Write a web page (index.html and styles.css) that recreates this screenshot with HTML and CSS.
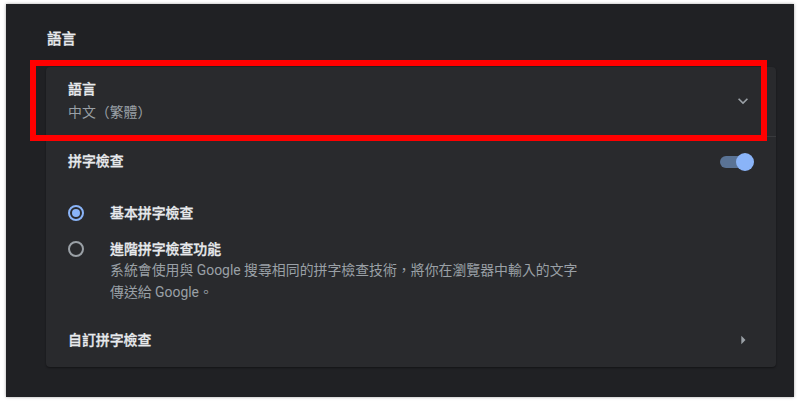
FILE: index.html
```html
<!DOCTYPE html>
<html lang="zh-Hant">
<head>
    <meta charset="UTF-8">
    <meta name="viewport" content="width=device-width, initial-scale=1.0">
    <title>語言設定</title>
    <link rel="stylesheet" href="styles.css">
</head>
<body>
    <div class="frame">
        <h2 class="section-title">語言</h2>

        <div class="card">
            <div class="row row-language">
                <div class="row-text">
                    <div class="label">語言</div>
                    <div class="sub">中文（繁體）</div>
                </div>
                <div class="icon-box">
                    <svg width="20" height="20" viewBox="0 0 24 24"><path d="M16.59 8.59L12 13.17 7.41 8.59 6 10l6 6 6-6z" fill="#9aa0a6"/></svg>
                </div>
            </div>

            <div class="row row-toggle">
                <div class="label">拼字檢查</div>
                <div class="toggle">
                    <span class="toggle-track"></span>
                    <span class="toggle-knob"></span>
                </div>
            </div>

            <div class="radio-list">
                <div class="radio-row radio-basic">
                    <span class="radio checked"></span>
                    <div class="label">基本拼字檢查</div>
                </div>
                <div class="radio-row radio-advanced">
                    <span class="radio"></span>
                    <div class="radio-text">
                        <div class="label">進階拼字檢查功能</div>
                        <div class="desc">系統會使用與 Google 搜尋相同的拼字檢查技術，將你在瀏覽器中輸入的文字<br>傳送給 Google。</div>
                    </div>
                </div>
            </div>

            <div class="row row-custom">
                <div class="label">自訂拼字檢查</div>
                <div class="icon-box">
                    <svg width="20" height="20" viewBox="0 0 24 24"><path d="M10 17l5-5-5-5v10z" fill="#9aa0a6"/></svg>
                </div>
            </div>
        </div>

        <!-- annotation box drawn over the language row -->
        <div class="highlight"></div>
    </div>
</body>
</html>
```

FILE: styles.css
```css
body {
    margin: 0;
    padding: 4px 6px 5px 6px;
    background-color: #fff;
    font-family: Roboto, "Noto Sans CJK TC", sans-serif;
    font-size: 13.9px;
    color: #e8eaed;
}
.frame {
    position: relative;
    height: 393px;
    box-sizing: border-box;
    padding: 26px 18px 0 40px;
    background-color: #202124;
    box-shadow: 0 0 3px rgba(0, 0, 0, 0.35);
}
.section-title {
    margin: 0 0 17px 1px;
    font-size: 14.5px;
    font-weight: 500;
    line-height: 20px;
    color: #e8eaed;
    -webkit-text-stroke: 0.3px #e8eaed;
}
.card {
    background-color: #292a2d;
    border-radius: 4px;
    box-shadow: 0 1px 2px rgba(0, 0, 0, 0.4);
}
.label {
    line-height: 20px;
    font-weight: 500;
    color: #e8eaed;
    -webkit-text-stroke: 0.3px #e8eaed;
}
.row {
    display: flex;
    align-items: center;
    justify-content: space-between;
    padding: 0 22px;
}
.row-language {
    padding-top: 12px;
    padding-bottom: 14px;
    padding-right: 23px;
    border-bottom: 1px solid rgba(255, 255, 255, 0.08);
}
.sub {
    margin-top: 3px;
    line-height: 20px;
    color: #9aa0a6;
}
.icon-box {
    width: 20px;
    height: 20px;
    display: flex;
}
.row-toggle {
    height: 48px;
    box-sizing: border-box;
}
.toggle {
    position: relative;
    width: 34px;
    height: 18px;
    margin-top: 2px;
}
.toggle-track {
    position: absolute;
    left: 0;
    top: 3px;
    width: 30px;
    height: 12px;
    border-radius: 6px;
    background-color: #5a7395;
}
.toggle-knob {
    position: absolute;
    right: 0;
    top: 0;
    width: 18px;
    height: 18px;
    border-radius: 50%;
    background-color: #8ab4f8;
}
.radio-list {
    padding: 8px 22px 10px 22px;
}
.radio-row {
    display: flex;
    gap: 26px;
}
.radio-basic {
    height: 40px;
    align-items: center;
}
.radio-advanced {
    padding-top: 6px;
    align-items: flex-start;
}
.radio {
    width: 16px;
    height: 16px;
    box-sizing: border-box;
    border: 2px solid #9aa0a6;
    border-radius: 50%;
    flex-shrink: 0;
    position: relative;
}
.radio-advanced .radio {
    margin-top: 2px;
}
.radio.checked {
    border-color: #8ab4f8;
}
.radio.checked::after {
    content: "";
    position: absolute;
    left: 2px;
    top: 2px;
    width: 8px;
    height: 8px;
    border-radius: 50%;
    background-color: #8ab4f8;
}
.desc {
    line-height: 22px;
    color: #9aa0a6;
}
.row-custom {
    height: 54px;
    padding-right: 23px;
}
.highlight {
    position: absolute;
    left: 24px;
    top: 56px;
    width: 737px;
    height: 81px;
    box-sizing: border-box;
    border: 6px solid #ff0000;
}
```
